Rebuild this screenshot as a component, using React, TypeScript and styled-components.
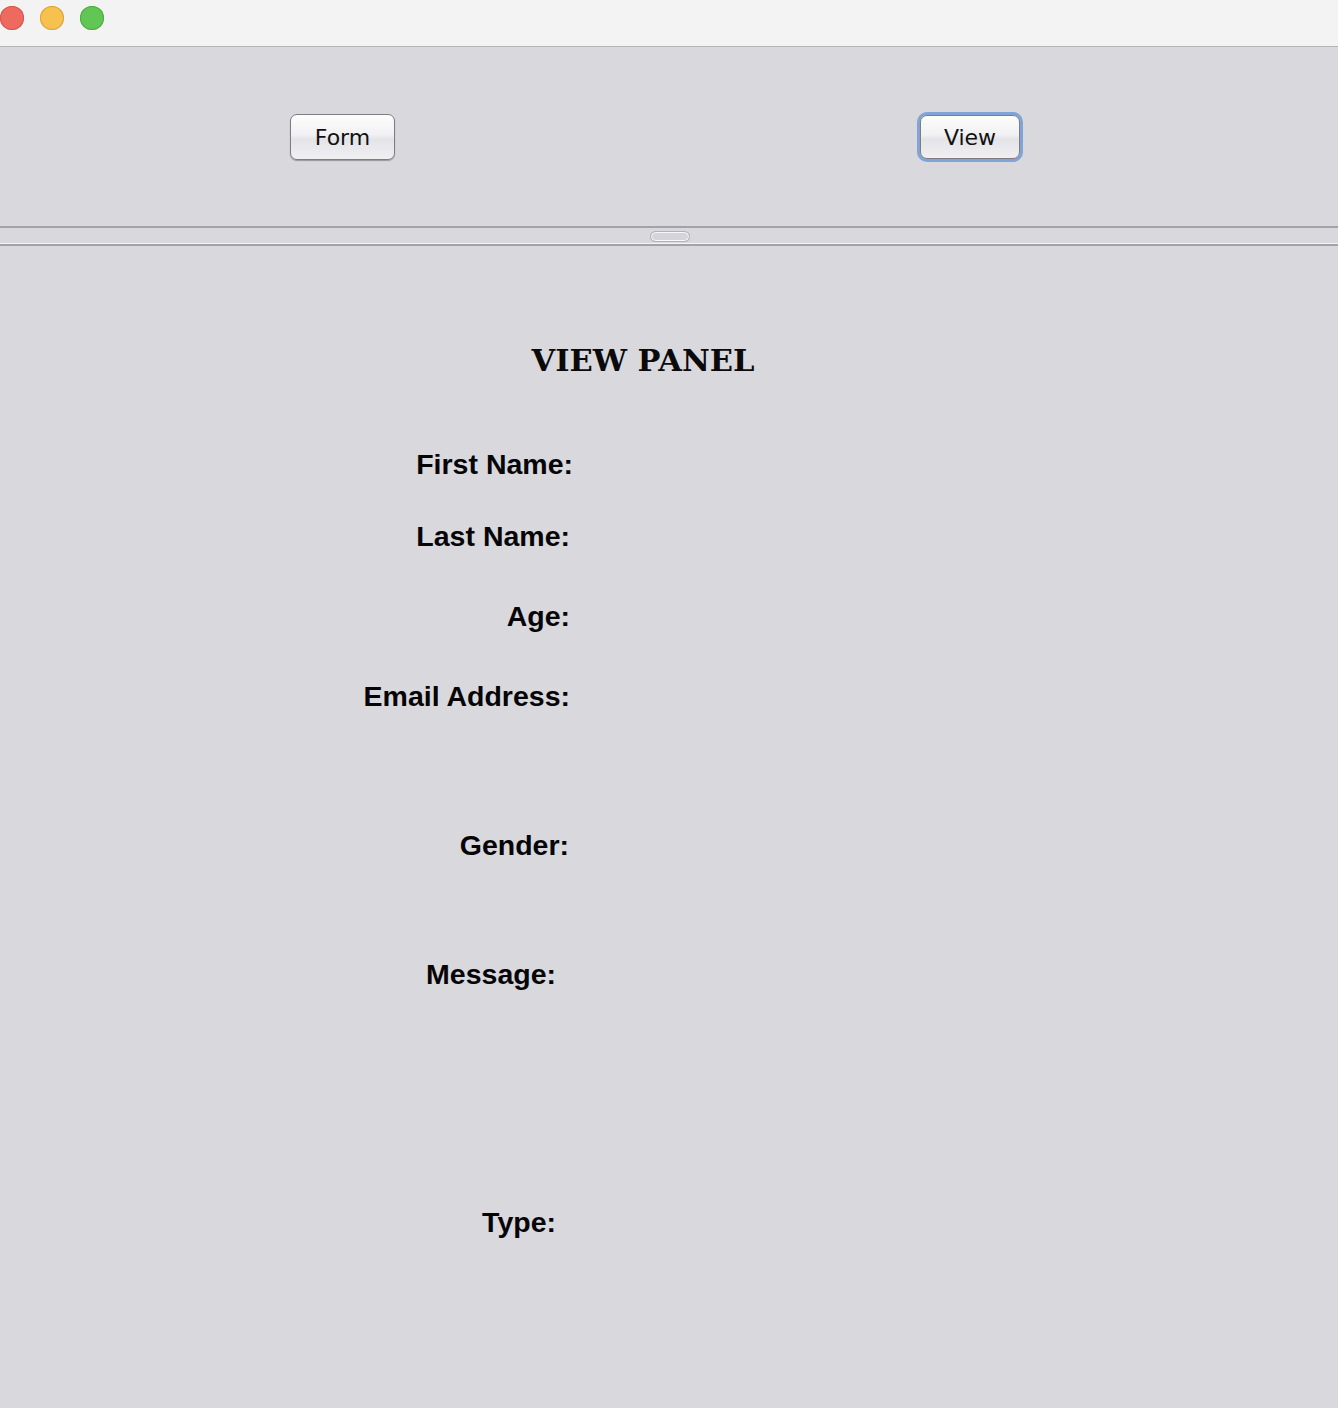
import styled, { createGlobalStyle } from 'styled-components';

const Global = createGlobalStyle`
	html, body {
		margin: 0;
		padding: 0;
		background: #d8d8dd;
	}
	#root {
		min-height: 100vh;
	}
`;

const Window = styled.div`
	display: flex;
	flex-direction: column;
	min-height: 1408px;
	background: #d8d8dd;
	font-family: 'Liberation Sans', Arial, sans-serif;
`;

const TitleBar = styled.div`
	height: 47px;
	background: #f3f3f3;
	border-bottom: 1px solid #b4b4b8;
	display: flex;
	align-items: flex-start;
	padding-top: 6px;
	box-sizing: border-box;
`;

const Lights = styled.div`
	display: flex;
	gap: 16px;
`;

const Light = styled.span<{ $color: string; $edge: string }>`
	width: 24px;
	height: 24px;
	border-radius: 50%;
	background: ${props => props.$color};
	box-shadow: inset 0 0 0 1px ${props => props.$edge};
`;

const Toolbar = styled.div`
	height: 179px;
	display: flex;
	align-items: center;
	padding-left: 290px;
	gap: 522px;
`;

const Button = styled.button<{ $focused?: boolean }>`
	width: 105px;
	height: 46px;
	box-sizing: border-box;
	border-radius: 7px;
	border: 1px solid #7d7d82;
	background: linear-gradient(#fdfdfd 0%, #f1f1f3 45%, #e4e4e8 55%, #f0f0f3 100%);
	font-family: 'DejaVu Sans', 'Liberation Sans', sans-serif;
	font-size: 22px;
	color: #111;
	padding: 2px 0 0 0;
	box-shadow: ${props =>
		props.$focused
			? '0 0 0 3px #80a3d8, 0 1px 1px rgba(0,0,0,0.25)'
			: '0 1px 1px rgba(0,0,0,0.3)'};
	${props => props.$focused && 'width: 100px; height: 44px; margin-left: 3px;'}
`;

const Divider = styled.div`
	height: 20px;
	border-top: 2px solid #a2a2a8;
	border-bottom: 2px solid #a2a2a8;
	box-sizing: border-box;
	display: flex;
	justify-content: center;
	align-items: center;
	box-shadow: inset 0 -1px 0 #f4f4f6;
`;

const Handle = styled.span`
	width: 36px;
	height: 7px;
	margin-left: 1px;
	border-radius: 5px;
	background: #d4d4da;
	border: 1px solid #f8f8fa;
	box-shadow: 0 0 0 1px #b2b2b8;
`;

const ViewPanel = styled.div`
	display: flex;
	flex-direction: column;
	padding-top: 94px;
`;

const Heading = styled.h1`
	margin: 0 0 68px 0;
	height: 40px;
	line-height: 40px;
	text-align: center;
	padding-right: 52px;
	font-family: 'DejaVu Serif', 'Liberation Serif', serif;
	font-size: 30.5px;
	font-weight: bold;
	color: #0a0a0a;
`;

const Row = styled.div<{ $height: number }>`
	height: ${props => props.$height}px;
	display: flex;
`;

const Label = styled.span<{ $shift?: number }>`
	width: ${props => 570 - (props.$shift ?? 0)}px;
	text-align: right;
	line-height: 32px;
	font-size: 28.5px;
	font-weight: bold;
	color: #050505;
`;

const fields = [
	{ label: 'First Name:', height: 72, shift: -3 },
	{ label: 'Last Name:', height: 80 },
	{ label: 'Age:', height: 80 },
	{ label: 'Email Address:', height: 149 },
	{ label: 'Gender:', height: 129, shift: 1 },
	{ label: 'Message:', height: 248, shift: 14 },
	{ label: 'Type:', height: 60, shift: 14 },
];

const App = () => (
	<Window>
		<Global />
		<TitleBar>
			<Lights>
				<Light $color="#ee6a5f" $edge="#d1574d" />
				<Light $color="#f6c14f" $edge="#dca53a" />
				<Light $color="#62c655" $edge="#4ea944" />
			</Lights>
		</TitleBar>
		<Toolbar>
			<Button>Form</Button>
			<Button $focused>View</Button>
		</Toolbar>
		<Divider>
			<Handle />
		</Divider>
		<ViewPanel>
			<Heading>VIEW PANEL</Heading>
			{fields.map(f => (
				<Row key={f.label} $height={f.height}>
					<Label $shift={f.shift}>{f.label}</Label>
				</Row>
			))}
		</ViewPanel>
	</Window>
);

export default App;
